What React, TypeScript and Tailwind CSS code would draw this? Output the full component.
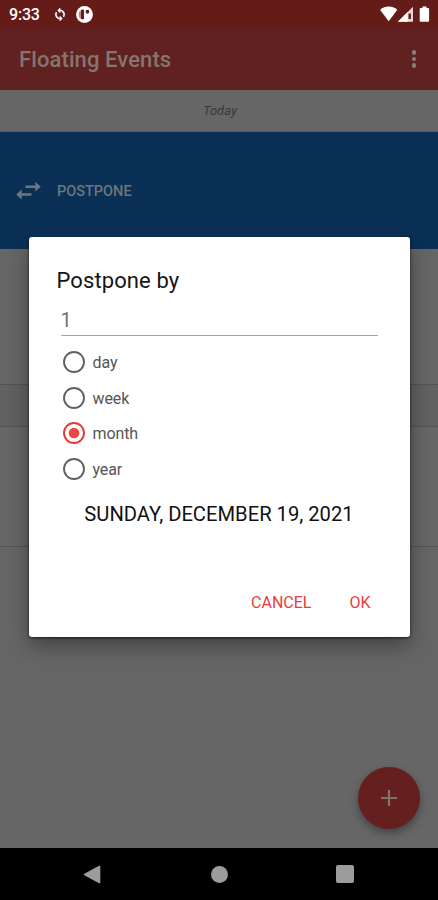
import { useState } from "react";

const units = ["day", "week", "month", "year"];

function StatusBar() {
  return (
    <div className="flex h-7 items-center bg-[#651b17] pr-[8px] pl-[9px] text-white">
      <span className="w-[44px] pt-px text-[16px] leading-7 font-medium tracking-[-0.2px]">9:33</span>
      <svg className="h-[15px] w-[14px]" viewBox="0 0 24 24" fill="currentColor" stroke="currentColor" strokeWidth="1">
        <path d="M12 4V1L8 5l4 4V6c3.31 0 6 2.69 6 6 0 1.01-.25 1.97-.7 2.8l1.46 1.46A7.93 7.93 0 0 0 20 12c0-4.42-3.58-8-8-8zm0 14c-3.31 0-6-2.69-6-6 0-1.01.25-1.97.7-2.8L5.24 7.74A7.93 7.93 0 0 0 4 12c0 4.42 3.58 8 8 8v3l4-4-4-4v3z" />
      </svg>
      <svg className="ml-[9px] h-[17px] w-[17px]" viewBox="0 0 17 17">
        <circle cx="8.5" cy="8.5" r="8.4" fill="#fff" />
        <path d="M7.800 3.600v9.800H6.500C3.900 12.800 2.600 10.800 2.600 8.500S3.900 4.200 6.500 3.600z" fill="#b58a88" />
        <rect x="5" y="3.800" width="3" height="9.200" fill="#651b17" />
        <rect x="9.700" y="4" width="3.400" height="3.400" rx="0.800" fill="#651b17" />
      </svg>
      <svg className="ml-auto h-[16px] w-[51px]" viewBox="0 0 51 16" fill="#fff">
        <path d="M1.200 3.900C6 -0.500 13.400 -0.500 18.200 3.900L9.700 15.200z" />
        <path d="M18.900 15.800L34 0.700v15.100z" fill="#e9d6d4" />
        <path d="M18.900 15.800L28.600 6.100v9.700z" />
        <path d="M29.500 7.500h2.400v5.500h-2.400z" fill="#651b17" />
        <path d="M43.500 0.600h4v1.500h1.800a0.800 0.800 0 0 1 .8.8v11.900a1 1 0 0 1-1 1h-7.400a1 1 0 0 1-1-1V2.900a0.800 0.800 0 0 1 .8-.8h2z" />
      </svg>
    </div>
  );
}

function AppBar() {
  return (
    <header className="flex h-[62px] items-center justify-between bg-[#612121] pr-[22px] pl-[19px] text-[#85756e]">
      <h1 className="pt-[2px] text-[22px] leading-none font-medium tracking-[0.1px]">Floating Events</h1>
      <button aria-label="More options" className="flex flex-col gap-[2px]">
        <span className="size-[4.5px] rounded-full bg-[#85807c]" />
        <span className="size-[4.5px] rounded-full bg-[#85807c]" />
        <span className="size-[4.5px] rounded-full bg-[#85807c]" />
      </button>
    </header>
  );
}

function EventList() {
  return (
    <main className="flex grow flex-col bg-[#666]">
      <div className="flex h-[42px] items-center justify-center border-b border-[#5b5b5b] pl-[2px] text-[13px] text-[#3a3a3a] italic">Today</div>
      <div className="flex h-[117px] items-center bg-[#0b3056] pl-4 text-[#6f7679]">
        <svg className="h-[20px] w-[25px]" viewBox="0 0 25 20" fill="currentColor">
          <path d="M9.500 4.500h9.800V0.800L24.800 5.700l-5.500 4.900V6.900H9.500zM15.500 12.300H5.700V8.600L0.200 13.500l5.500 4.900v-3.700h9.800z" />
        </svg>
        <span className="ml-[16px] pt-[2px] text-[14.5px] font-medium">POSTPONE</span>
      </div>
      <div className="h-[136px] border-b border-[#545454]" />
      <div className="h-[42px] border-b border-[#545454] bg-[#616161]" />
      <div className="h-[120px] border-b border-[#545454]" />
      <button aria-label="Add event" className="mt-auto mr-[18px] mb-[19px] flex size-[62px] items-center justify-center self-end rounded-full bg-[#651f1f] shadow-[0_4px_8px_rgba(0,0,0,0.35)]">
        <svg className="size-[18px]" viewBox="0 0 18 18" stroke="#83726a" strokeWidth="2.200">
          <path d="M9 1v16M1 9h16" />
        </svg>
      </button>
    </main>
  );
}

function NavigationBar() {
  return (
    <nav className="flex h-[52px] items-center bg-black pl-[83px] text-[#9c9c9c]">
      <svg className="h-[19px] w-[18px]" viewBox="0 0 18 19" fill="currentColor">
        <path d="M1.300 8.700L16 0.800q1.300-.3 1.300 1v15.400q0 1.300-1.300 1L1.300 10.300q-1.100-.8 0-1.600z" />
      </svg>
      <span className="ml-[110px] size-[17px] rounded-full bg-[#9c9c9c]" />
      <span className="ml-[108px] size-[17.5px] rounded-[2px] bg-[#9c9c9c]" />
    </nav>
  );
}

function PostponeDialog() {
  const [amount, setAmount] = useState("1");
  const [unit, setUnit] = useState("month");

  return (
    <div className="absolute inset-0 flex items-start justify-center pt-[237px]">
      <section className="flex h-[400px] w-[381px] flex-col rounded-[3px] bg-white shadow-[0_9px_22px_rgba(0,0,0,0.36),0_1px_3px_rgba(0,0,0,0.65)]">
        <h2 className="mt-[30px] ml-[28px] text-[22px] leading-[28px] tracking-[0.1px] text-[#151515]">Postpone by</h2>
        <input
          className="mt-[7px] mr-[32px] ml-[32px] h-[34px] border-b border-[#a5a5a5] pt-[3px] text-[20px] text-[#727272] outline-none"
          value={amount}
          onChange={(e) => setAmount(e.target.value)}
        />
        <div className="mt-[8px] ml-[34px]">
          {units.map((item) => (
            <label key={item} className="flex h-[35.7px] items-center text-[16px] text-[#555]">
              <input className="sr-only" type="radio" name="unit" checked={unit === item} onChange={() => setUnit(item)} />
              <svg className="mr-[7px] size-[22px]" viewBox="0 0 22 22">
                <circle cx="11" cy="11" r="10" fill="none" stroke={unit === item ? "#e53935" : "#616161"} strokeWidth="1.900" />
                {unit === item ? <circle cx="11" cy="11" r="5.300" fill="#e94741" /> : null}
              </svg>
              <span className="pt-[2px] pl-px tracking-[-0.1px]">{item}</span>
            </label>
          ))}
        </div>
        <p className="mt-[15px] text-center text-[20.2px] leading-[25px] text-[#111]">SUNDAY, DECEMBER 19, 2021</p>
        <div className="mt-auto mr-[39px] mb-[22px] flex justify-end gap-[38px] text-[16px] leading-[24px] text-[#e93d3a]">
          <button>CANCEL</button>
          <button>OK</button>
        </div>
      </section>
    </div>
  );
}

export default function App() {
  return (
    <div className="relative flex h-[900px] w-[438px] flex-col overflow-hidden bg-[#666] font-[Roboto,sans-serif]">
      <StatusBar />
      <AppBar />
      <EventList />
      <NavigationBar />
      <PostponeDialog />
    </div>
  );
}
